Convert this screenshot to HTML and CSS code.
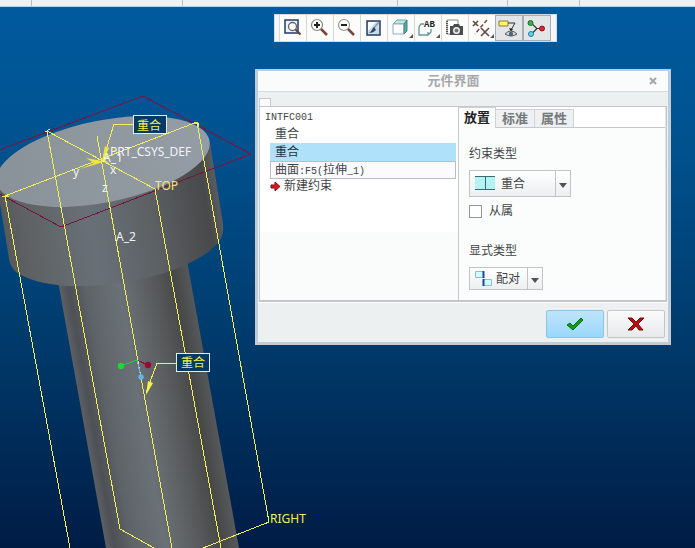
FILE: index.html
```html
<!DOCTYPE html>
<html lang="zh-CN">
<head>
<meta charset="utf-8">
<title>元件界面</title>
<link rel="stylesheet" href="styles.css">
</head>
<body>
<div class="ribbon"><i></i><i></i><i></i><i></i><i></i></div>
<main class="viewport">
<svg class="scene" viewBox="0 7 695 541" preserveAspectRatio="xMinYMin slice">
  <defs>
    <linearGradient id="face" x1="0" y1="0" x2="1" y2="0"><stop offset="0" stop-color="#8a9299"/><stop offset="1" stop-color="#949ca5"/></linearGradient>
    <linearGradient id="head" gradientUnits="userSpaceOnUse" x1="0" y1="250" x2="222" y2="214"><stop offset="0" stop-color="#555759"/><stop offset=".15" stop-color="#606365"/><stop offset=".42" stop-color="#687077"/><stop offset=".7" stop-color="#5c6063"/><stop offset=".83" stop-color="#505254"/><stop offset=".94" stop-color="#49494b"/><stop offset="1" stop-color="#5b5d60"/></linearGradient>
    <linearGradient id="shaft" gradientUnits="userSpaceOnUse" x1="81" y1="410" x2="210" y2="387"><stop offset="0" stop-color="#5c6065"/><stop offset=".07" stop-color="#4d5054"/><stop offset=".2" stop-color="#5e6367"/><stop offset=".45" stop-color="#6a7177"/><stop offset=".65" stop-color="#5d6062"/><stop offset=".88" stop-color="#484848"/><stop offset="1" stop-color="#56585a"/></linearGradient>
  </defs>
  <path d="M56 270 106 548H239L186 255Z" fill="url(#shaft)"/>
  <path d="M-4 179 9 259C11 269 16 273 25 277C48 287 81 288 112 284C160 279 207 260 220 240Q224 233 223 224L210 143Z" fill="url(#head)"/>
  <ellipse cx="103" cy="161.500" rx="108.500" ry="41" transform="rotate(-11.200 103 161.500)" fill="url(#face)"/>
  <g fill="none" shape-rendering="crispEdges">
    <path d="M-6 152 143 96 251 154 61 227-6 191" stroke="#76143f"/>
    <g stroke="#f1f05a">
      <path d="M5 196 197 122M47 131 155 189M5 196 70 548M47 131 120 529 154 548M97 136 172 548M155 189 221 548M197 122 269 522 203 548"/>
      <path d="M133 124H114L103 160M176 363H157L146 393"/>
      <path d="M45 132l5-3M2 197l7-1M193 124l5-1 1 4"/>
    </g>
    <path d="M137 360 121 366" stroke="#18d236"/><path d="M137 360 148 365" stroke="#8d1238"/><path d="M137 360 141 377" stroke="#69b3ee"/>
  </g>
  <path d="m102 161 3-15 4 2-4 9 5-1-5 4 4 3-6-1-9 3-14 4 14-6-8-5Z" fill="#eee63c"/>
  <path d="m146 395 2-14 5 2Z" fill="#f8f344"/>
  <circle cx="121" cy="366" r="3.200" fill="#1ad83a"/><circle cx="148" cy="365" r="3.200" fill="#970a37"/><circle cx="141" cy="377" r="2.700" fill="#67b3ef"/>
  <g class="scene-text">
    <text x="110" y="156">PRT_CSYS_DEF</text><text x="103" y="162">A_1</text><text x="73" y="176">y</text><text x="110" y="174">x</text><text x="102" y="192">z</text><text x="116" y="241">A_2</text>
    <text x="155" y="190" class="datum">TOP</text><text x="270" y="523" class="datum">RIGHT</text>
  </g>
  <g class="scene-tag">
    <rect x="133.500" y="115.500" width="33" height="18"/><text x="137" y="130">重合</text>
    <rect x="176.500" y="353.500" width="33" height="18"/><text x="181" y="367">重合</text>
  </g>
</svg>

<nav class="toolbar" aria-label="视图">
  <button type="button" aria-label="重新调整"><svg viewBox="0 0 24 24"><path d="M4 4h13v13H4z" fill="#e9f4fb" stroke="#203a70" stroke-width="1.500"/><circle cx="11.500" cy="10.500" r="4" fill="#fff" stroke="#6a625e" stroke-width="1.300"/><path d="m14.500 13.500 5 5" stroke="#68483b" stroke-width="2.200"/></svg></button>
  <button type="button" aria-label="放大"><svg viewBox="0 0 24 24"><circle cx="9" cy="9" r="5.500" fill="#fbfbf8" stroke="#888" stroke-width="1.200"/><path d="M6 9h6M9 6v6" stroke="#222" stroke-width="2"/><path d="m13 13 6 6" stroke="#76483c" stroke-width="2.500"/></svg></button>
  <button type="button" aria-label="缩小"><svg viewBox="0 0 24 24"><circle cx="9" cy="9" r="5.500" fill="#fbfbf8" stroke="#999" stroke-width="1.200"/><path d="M6 9h6" stroke="#222" stroke-width="2"/><path d="m13 13 6 6" stroke="#76483c" stroke-width="2.500"/></svg></button>
  <button type="button" aria-label="重画"><svg viewBox="0 0 24 24"><path d="M5 5h13v14H5z" fill="#c8dcee" stroke="#263d61" stroke-width="1.500"/><path d="M6 6h8L6 15Z" fill="#f8fcff"/><path d="m17 6-6 7" stroke="#8c99a7" stroke-width="1.500"/><path d="m12 11 2 3c-2 2-4 3-7 3 2-1 3-4 5-6Z" fill="#304766"/></svg></button>
  <button type="button" aria-label="显示样式" class="menu"><svg viewBox="0 0 24 24"><path d="M4 8 8 4h10l-3 4Z" fill="#bce9e4" stroke="#6aa9a7"/><path d="M4 8h11v10H4z" fill="#fff" stroke="#9ab"/><path d="m15 8 3-4v11l-3 3Z" fill="#52aaa7" stroke="#488"/></svg></button>
  <button type="button" aria-label="已保存方向" class="menu"><svg viewBox="0 0 24 24"><path d="M8 8H5l-2 3v8h9l3-3v-3M12 19v-3" fill="none" stroke="#60989b" stroke-width="1.300"/><text x="8" y="11" class="icon-text">AB</text></svg></button>
  <button type="button" aria-label="视图管理器"><svg viewBox="0 0 24 24"><path d="M4 4h11v14H4z" fill="#fff" stroke="#888"/><path d="M4 5v13" stroke="#555" stroke-width="2" stroke-dasharray="1 1"/><path d="M7 10h3l1-2h5l1 2h3v9H7z" fill="#4b4c4e"/><circle cx="13.500" cy="14.500" r="3.500" fill="#eee"/><circle cx="13.500" cy="14.500" r="2" fill="#777"/></svg></button>
  <button type="button" aria-label="基准显示" class="menu"><svg viewBox="0 0 24 24"><path d="m3 5 5 5M8 5l-5 5M11 12l8 8M19 12l-8 8" stroke="#66483c" stroke-width="1.600"/><path d="M17 4 5 18" stroke="#79503b" stroke-width="1.500" stroke-dasharray="4 2"/></svg></button>
  <button type="button" aria-label="注释显示" aria-pressed="true"><svg viewBox="0 0 24 24"><path d="M2 4h9v5H2z" fill="#fff47b" stroke="#8c7d23"/><path d="M11 6h7l-4 7" fill="none" stroke="#333"/><path d="m12 11 4 1-2 3Z" fill="#222"/><path d="M8 17q6-6 12 0-6 4-12 0Z" fill="#dce0e3" stroke="#555"/><circle cx="14" cy="17" r="2.200" fill="#526477"/></svg></button>
  <button type="button" aria-label="旋转中心" aria-pressed="true"><svg viewBox="0 0 24 24"><path d="m6 6 6 5.500-5 5M12 11.500h6" fill="none" stroke="#333" stroke-width="1.200"/><circle cx="5.500" cy="6" r="2.500" fill="#37b343" stroke="#1a6e27"/><circle cx="17" cy="11.500" r="2.500" fill="#d52b36" stroke="#8a1520"/><circle cx="6" cy="17" r="2.500" fill="#5fd6e7" stroke="#287c96"/></svg></button>
</nav>

<section class="dialog" role="dialog" aria-labelledby="dialog-title">
  <header class="titlebar"><h1 id="dialog-title">元件界面</h1><button type="button" class="close" aria-label="关闭"><svg viewBox="0 0 8 8"><path d="m1 1 6 6M7 1 1 7" stroke="#a5a7a9" stroke-width="2"/></svg></button></header>
  <div class="stub"></div>
  <div class="panels">
    <div class="tree">
      <div class="set"><span class="latin">INTFC001</span></div>
      <ul>
        <li>重合</li>
        <li class="selected">重合</li>
        <li class="reference">曲面<span class="latin">:F5(</span>拉伸<span class="latin">_1)</span></li>
      </ul>
      <button type="button" class="new"><svg viewBox="0 0 11 11"><path d="M1 4h4V1l5 4.500L5 10V7H1Z" fill="#dd1721" stroke="#7b1015"/></svg>新建约束</button>
    </div>
    <div class="detail">
      <div class="tabs" role="tablist"><button type="button" role="tab" aria-selected="true">放置</button><button type="button" role="tab" aria-selected="false">标准</button><button type="button" role="tab" aria-selected="false">属性</button></div>
      <form class="fields">
        <label for="constraint">约束类型</label>
        <div class="combo wide"><svg class="kind" viewBox="0 0 20 14"><path d="M0 1h20v12H0z" fill="#b4f2f4"/><path d="M0 .5h20M0 13.500h20M10.500 0v14" stroke="#376b72"/></svg><select id="constraint"><option>重合</option></select></div>
        <div class="check"><input type="checkbox" id="dependent"><label for="dependent">从属</label></div>
        <label for="explicit">显式类型</label>
        <div class="combo narrow"><svg class="kind" viewBox="0 0 17 17"><path d="M.5 1.500h8v6h-8zM8.500 9.500h8v6h-8z" fill="#d4fbfc" stroke="#8fc0c6"/><path d="M8.500 1v7M8.500 9v7" stroke="#1647a6" stroke-width="2"/></svg><select id="explicit"><option>配对</option></select></div>
      </form>
    </div>
  </div>
  <footer><button type="button" class="ok" aria-label="确定"><svg viewBox="0 0 18 14"><path d="m1 8 3-2 3 3 8-8 2 2L7 13Z" fill="#159b1c" stroke="#096e10"/></svg></button><button type="button" aria-label="取消"><svg viewBox="0 0 18 14"><path d="M1 1h4l4 4 4-4h4l-6 6 5 6h-4l-3-4-4 4H1l6-6Z" fill="#b80d12" stroke="#780d0e"/></svg></button></footer>
</section>
</main>
</body>
</html>
```

FILE: styles.css
```css
* { box-sizing: border-box; }
body {
  display: flex;
  flex-direction: column;
  min-height: 100vh;
  margin: 0;
  overflow: hidden;
  font: 12px/16px "Liberation Sans", "Noto Sans CJK SC", sans-serif;
  color: #424446;
}
button, select { font: inherit; color: inherit; margin: 0; }
svg { display: block; }

.ribbon {
  display: grid;
  grid-template-columns: 32fr 151fr 215fr 110fr 72fr 115fr;
  height: 7px;
  background: #eff0f2;
  border-bottom: 1px solid #a8d8ee;
}
.ribbon i { border-right: 1px solid #b9bdc1; }

.viewport {
  position: relative;
  flex: 1;
  overflow: hidden;
  background: linear-gradient(#005a9e, #00528f 25%, #003a6b 62%, #001c45);
}
.scene { position: absolute; inset: 0; width: 100%; height: 100%; }
.scene-text { font: 12px "Noto Sans", sans-serif; fill: #f4f5f6; }
.scene-text .datum { fill: #f0f05e; }
.scene-tag { font: 12px "Noto Sans CJK SC", sans-serif; fill: #f2f24a; }
.scene-tag rect { fill: #003a66; stroke: #e4edf2; }
.icon-text { font: bold 9px "Liberation Mono", monospace; fill: #222; }

.toolbar {
  position: absolute;
  top: 7px;
  left: 274px;
  display: flex;
  height: 28px;
  padding: 0 5px 0 4px;
  background: #f5f6f7;
  border: 1px solid #d3dce4;
}
.toolbar button {
  position: relative;
  width: 27px;
  padding: 1px;
  background: #fcfcfb;
  border: 0;
  border-left: 1px solid #d4d6d8;
}
.toolbar svg { width: 24px; height: 24px; fill: none; }
.toolbar button[aria-pressed] {
  width: 28px;
  background: #e3e6e9;
  border: 1px solid #a8adb3;
}
.toolbar .menu::after {
  content: "";
  position: absolute;
  right: 1px;
  bottom: 3px;
  border: 2px solid transparent;
  border-right-color: #555;
  border-bottom-color: #555;
}

.dialog {
  position: absolute;
  top: 62px;
  left: 255px;
  right: 24px;
  background: #edf0f1;
  border: 3px solid #c2ccd6;
  border-top-width: 2px;
}
.titlebar {
  display: flex;
  align-items: center;
  height: 21px;
  padding-right: 11px;
  background: #fafbfb;
  border-bottom: 1px solid #d8dbde;
}
h1 { flex: 1; margin: 0; text-align: center; font-size: 13px; line-height: 20px; color: #a6a8aa; }
.close { padding: 0; border: 0; background: none; }
.close svg { width: 8px; height: 8px; }
.stub {
  width: 12px;
  height: 8px;
  margin: 6px 0 0 1px;
  background: #fafbfb;
  border: 1px solid #c6cacd;
  border-bottom: 0;
}
.panels {
  display: grid;
  grid-template-columns: 200fr 208fr;
  margin: 0 1px;
  border: 1px solid #c3c7cb;
  border-bottom-width: 2px;
  background: #fbfcfc;
}
.tree { padding: 0 2px 0 0; border-right: 1px solid #c6c9cc; background: linear-gradient(#fff 65%, #fafbfb 65%); }
.latin { font: 10px/1 "Liberation Mono", monospace; }
.set { padding-left: 5px; line-height: 18px; }
ul { margin: 0 0 0 10px; padding: 0; list-style: none; }
li { height: 18px; padding-left: 5px; line-height: 18px; white-space: nowrap; }
.selected { background: #afe1fa; color: #24333c; }
.reference { padding-left: 4px; line-height: 16px; background: #fafaff; border: 1px solid #b9bcc1; }
.new {
  display: flex;
  align-items: center;
  gap: 3px;
  padding: 0;
  margin-left: 10px;
  line-height: 14px;
  border: 0;
  background: none;
}
.new svg { width: 11px; height: 11px; }

.detail { border-right: 1px solid #dfe2e4; }
.tabs { display: flex; align-items: flex-end; height: 21px; background: #fff; border-bottom: 1px solid #c6c9cc; }
.tabs button {
  width: 39px;
  height: 18px;
  padding: 0;
  background: #eef0f1;
  border: 1px solid #ced2d5;
  border-width: 1px 1px 0 0;
  color: #76797c;
  font-size: 13px;
  font-weight: bold;
  line-height: 16px;
}
.tabs [aria-selected="true"] { width: 37px; height: 21px; margin-bottom: -1px; background: #fbfcfc; color: #222; }
.fields { display: flex; flex-direction: column; align-items: flex-start; padding: 18px 10px 10px; }
.combo {
  position: relative;
  display: flex;
  margin-top: 8px;
  background: linear-gradient(#fff, #eceff0);
  border: 1px solid #c1c4c7;
}
.combo select { width: 100%; height: 100%; padding: 0; border: 0; background: none; appearance: none; }
.combo::before {
  content: "";
  position: absolute;
  top: 0;
  right: 14px;
  bottom: 0;
  border-left: 1px solid #c1c4c7;
}
.combo::after {
  content: "";
  position: absolute;
  top: 50%;
  right: 3px;
  border: 4px solid transparent;
  border-top: 5px solid #505356;
  border-bottom: 0;
  margin-top: -1px;
}
.kind { position: absolute; top: 5px; left: 5px; width: 20px; height: 14px; }
.wide { width: 102px; height: 27px; }
.wide select { padding-left: 31px; }
.narrow { width: 74px; height: 23px; }
.narrow select { padding-left: 26px; }
.narrow .kind { top: 2px; width: 17px; height: 17px; }
.check { display: flex; align-items: center; gap: 7px; margin: 6px 0 24px; }
.check input { width: 13px; height: 13px; margin: 0; appearance: none; background: #fff; border: 1px solid #92969a; }

footer { display: flex; justify-content: flex-end; gap: 3px; padding: 7px 3px 4px; border-top: 1px solid #fff; }
footer button {
  display: grid;
  place-items: center;
  width: 58px;
  height: 28px;
  padding: 0;
  background: linear-gradient(#fbfbfc, #e8e9eb);
  border: 1px solid #c2c6cb;
  border-radius: 2px;
}
footer .ok { background: linear-gradient(#bfe4fb, #99d8fb); border-color: #8fc4df; }
footer svg { width: 18px; height: 14px; }
```
